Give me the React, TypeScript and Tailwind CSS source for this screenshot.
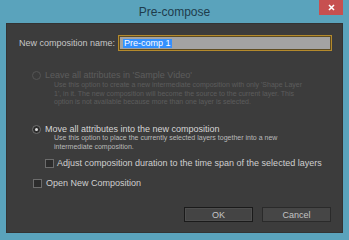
const font = "font-['Liberation_Sans',Arial,sans-serif]";

function Radio({ checked, disabled }: { checked?: boolean; disabled?: boolean }) {
  return (
    <span
      className={
        "flex h-[9px] w-[9px] shrink-0 items-center justify-center rounded-full border " +
        (disabled ? "border-[#555555] bg-[#3b3b3b]" : "border-[#707070] bg-[#2c2c2c]")
      }
    >
      {checked && <span className="h-[3px] w-[3px] rounded-full bg-[#e0e0e0]" />}
    </span>
  );
}

function Checkbox() {
  return <span className="h-[9px] w-[9px] shrink-0 border border-[#6c6c6c] bg-[#2c2c2c]" />;
}

export default function App() {
  return (
    <div className={`flex h-[240px] w-[349px] flex-col bg-[#5aa3bc] ${font}`}>
      {/* title bar */}
      <div className="relative flex h-[23px] items-center justify-center">
        <span className="text-[12px] text-[#1e3c4c]">Pre-compose</span>
        <div className="absolute right-[6px] top-0 flex h-[15px] w-[24px] items-center justify-center bg-[#c75050]">
          <svg width="7" height="7" viewBox="0 0 7 7">
            <path d="M1 1L6 6M6 1L1 6" stroke="#fff" strokeWidth="1.6" />
          </svg>
        </div>
      </div>

      {/* body */}
      <div className="mx-[6px] flex h-[210px] flex-col border border-[#333333] bg-[#3c3c3c] text-[9px] leading-[10px]">
        <div className="mt-[11px] flex items-center pl-[12px] pr-[10px]">
          <span className="w-[99px] whitespace-nowrap text-[#c6c6c6]">New composition name:</span>
          <div className="flex h-[16px] flex-1 items-center border border-[#b48a2c] bg-[#a3a3a3] pl-[4px] shadow-[inset_0_0_0_1px_#5e4c22]">
            <span className="bg-[#3390ff] px-px leading-[9px] text-white">Pre-comp 1</span>
          </div>
        </div>

        {/* option 1 disabled */}
        <div className="mt-[19px] pl-[25px] text-[#5c5c5c]">
          <div className="flex items-center gap-[4px]">
            <Radio disabled />
            <span className="whitespace-nowrap">Leave all attributes in 'Sample Video'</span>
          </div>
          <p className="mt-px whitespace-nowrap pl-[22px] text-[7px] leading-[8.7px]">
            Use this option to create a new intermediate composition with only 'Shape Layer
            <br />
            1', in it. The new composition will become the source to the current layer. This
            <br />
            option is not available because more than one layer is selected.
          </p>
        </div>

        {/* option 2 */}
        <div className="mt-[17px] pl-[25px]">
          <div className="flex items-center gap-[4px]">
            <Radio checked />
            <span className="whitespace-nowrap text-[#d6d6d6]">Move all attributes into the new composition</span>
          </div>
          <p className="mt-[-1px] whitespace-nowrap pl-[22px] text-[7px] leading-[9px] text-[#bababa]">
            Use this option to place the currently selected layers together into a new
            <br />
            intermediate composition.
          </p>
          <div className="mt-[7px] flex items-center gap-[3px] pl-[13px]">
            <Checkbox />
            <span className="whitespace-nowrap text-[#cfcfcf]">
              Adjust composition duration to the time span of the selected layers
            </span>
          </div>
        </div>

        <div className="mt-[10px] flex items-center gap-[4px] pl-[26px]">
          <Checkbox />
          <span className="whitespace-nowrap text-[#cfcfcf]">Open New Composition</span>
        </div>

        <div className="mt-auto mb-[10px] flex justify-end gap-[9px] pr-[11px]">
          <button className="flex h-[15px] w-[69px] items-center justify-center border border-[#1a1a1a] bg-[#444444] text-[#c4c4c4] shadow-[inset_0_0_0_1px_#4e4e4e]">
            OK
          </button>
          <button className="flex h-[15px] w-[69px] items-center justify-center border border-[#2a2a2a] bg-[#464646] text-[#c4c4c4]">
            Cancel
          </button>
        </div>
      </div>
    </div>
  );
}
